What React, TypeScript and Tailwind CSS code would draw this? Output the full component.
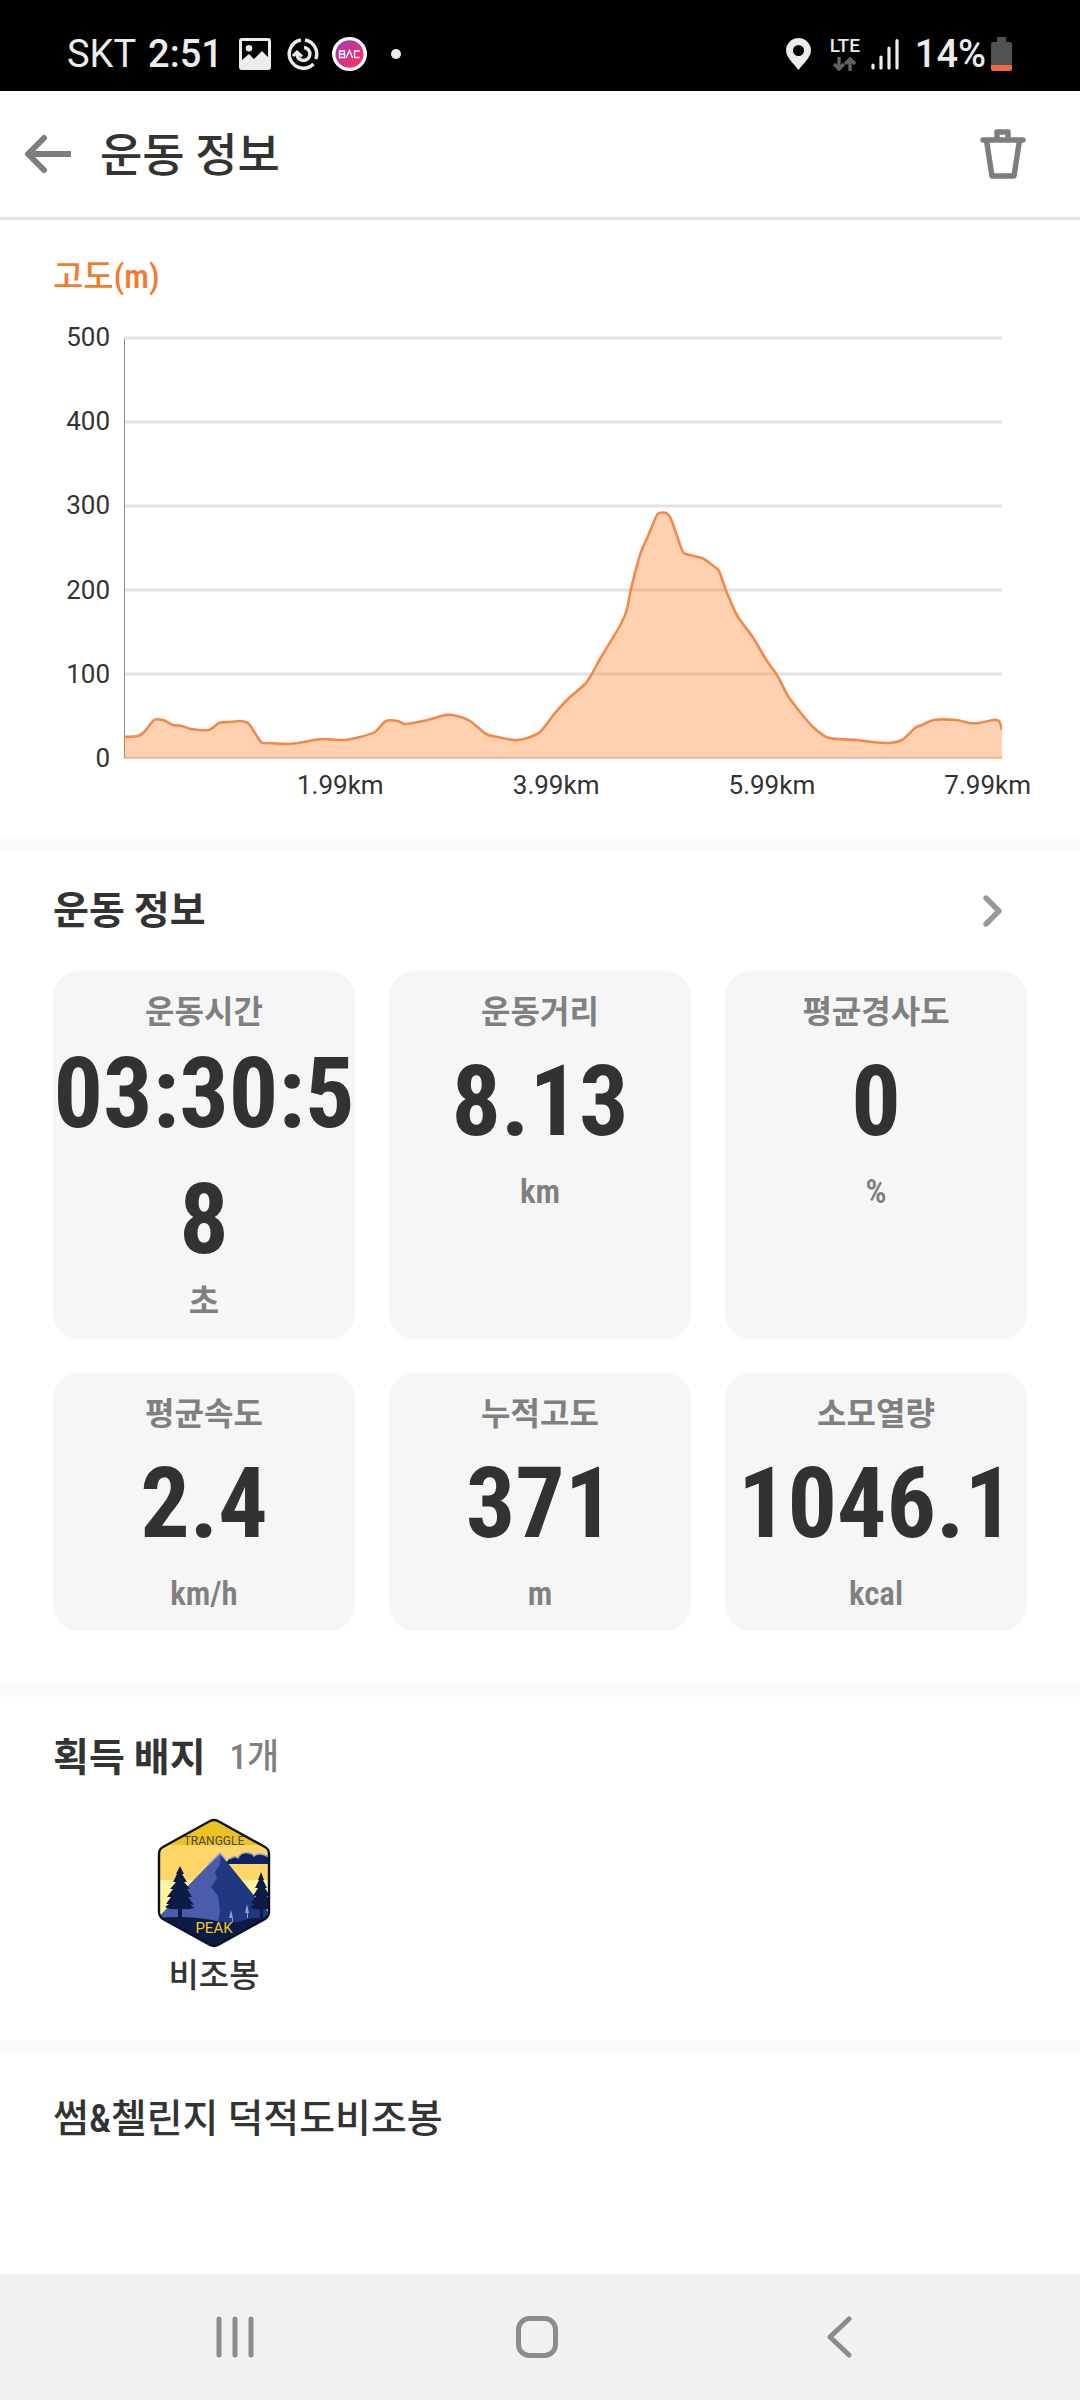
import type { ReactNode } from "react";

type Point = [number, number];

const elevation: Point[] = [
  [124, 737], [138, 736], [145, 731], [154, 720], [163, 720], [173, 725], [182, 726], [191, 729],
  [209, 730], [219, 723], [231, 722], [240, 721], [249, 724], [261, 742], [270, 743], [289, 744],
  [304, 742], [314, 740], [325, 739], [344, 740], [360, 737], [375, 732], [386, 721], [398, 721],
  [405, 724], [423, 721], [446, 715], [457, 716], [470, 721], [486, 734], [498, 737], [513, 740],
  [524, 739], [540, 732], [555, 713], [569, 698], [585, 684], [593, 672], [600, 659], [621, 624],
  [627, 609], [631, 589], [640, 555], [648, 536], [656, 517], [659, 513], [666, 513], [671, 519],
  [682, 550], [686, 554], [702, 558], [712, 565], [719, 571], [727, 593], [738, 617], [752, 636],
  [767, 661], [777, 675], [788, 696], [800, 712], [814, 728], [829, 738], [857, 740], [872, 742],
  [889, 743], [902, 740], [915, 728], [922, 725], [934, 720], [956, 720], [969, 723], [979, 723],
  [993, 720], [999, 721], [1002, 730],
];

function smooth(points: Point[]) {
  let d = `M${points[0][0]} ${points[0][1]}`;
  for (let i = 0; i < points.length - 1; i++) {
    const a = points[Math.max(i - 1, 0)];
    const b = points[i];
    const c = points[i + 1];
    const e = points[Math.min(i + 2, points.length - 1)];
    d += `C${b[0] + (c[0] - a[0]) / 8} ${b[1] + (c[1] - a[1]) / 8} ${c[0] - (e[0] - b[0]) / 8} ${c[1] - (e[1] - b[1]) / 8} ${c[0]} ${c[1]}`;
  }
  return d;
}

const linePath = smooth(elevation);
const gridLines = [338, 422, 506, 590, 674, 758];

const stats = [
  { label: "운동시간", value: "03:30:58", unit: "초", long: true },
  { label: "운동거리", value: "8.13", unit: "km" },
  { label: "평균경사도", value: "0", unit: "%" },
  { label: "평균속도", value: "2.4", unit: "km/h" },
  { label: "누적고도", value: "371", unit: "m" },
  { label: "소모열량", value: "1046.1", unit: "kcal" },
];

function StatusBar() {
  return (
    <div className="flex h-[91px] items-center justify-between bg-black pt-4 pr-[68px] pl-[67px] font-['Roboto',sans-serif] text-[#ececec]">
      <div className="flex items-center">
        <span className="text-[38px] leading-10">SKT</span>
        <span className="ml-3 text-[38px] leading-10 font-medium">2:51</span>
        <svg className="ml-4 size-8" viewBox="0 0 32 32" aria-hidden="true">
          <path
            fill="#ececec"
            fillRule="evenodd"
            d="M3 0h26a3 3 0 0 1 3 3v26a3 3 0 0 1-3 3H3a3 3 0 0 1-3-3V3a3 3 0 0 1 3-3zM3 3v19l7-6 5 5 8-8 6 6V3zM10 7a3.300 3.300 0 1 1 0 6.600a3.300 3.300 0 0 1 0-6.600z"
          />
        </svg>
        <svg className="ml-4 size-8" viewBox="0 0 32 32" fill="none" stroke="#ececec" aria-hidden="true">
          <path strokeWidth="3.400" d="M14 2A14.200 14.200 0 1 0 26.500 26" />
          <path strokeWidth="3.400" d="M18 2A14.200 14.200 0 0 1 28.800 21" />
          <path strokeWidth="3.400" d="M17 9.500A6.500 6.500 0 1 1 10 15" />
          <path strokeWidth="3" d="M6 18l4-4 5 4.500" />
        </svg>
        <svg className="ml-[13px] h-[34px] w-[35px]" viewBox="0 0 35 34" role="img" aria-label="BAC">
          <defs>
            <linearGradient id="bac" x1="0" y1="0" x2="1" y2="1">
              <stop offset="0.100" stopColor="#a43db0" />
              <stop offset="0.900" stopColor="#ff2d62" />
            </linearGradient>
          </defs>
          <ellipse cx="17.500" cy="17" rx="17.500" ry="17" fill="#fff" />
          <ellipse cx="17.500" cy="17" rx="14" ry="13.800" fill="url(#bac)" />
          <g fill="none" stroke="#fff" strokeWidth="1.300">
            <path d="M7.500 14h5v6.500h-5zM7.500 17.200h5" />
            <path d="M14 21l3.500-7.500L20.500 21" />
            <path d="M28 14h-5.500v6.500H28" />
          </g>
        </svg>
        <span className="ml-6 size-[10px] rounded-full bg-[#ececec]" />
      </div>
      <div className="flex items-center">
        <svg className="h-8 w-[25px]" viewBox="0 0 25 32" aria-hidden="true">
          <path
            fill="#ececec"
            fillRule="evenodd"
            d="M12.500 0A12.500 12.500 0 0 1 25 12.500C25 19 17 26 12.500 32 8 26 0 19 0 12.500A12.500 12.500 0 0 1 12.500 0zm0 7a5.500 5.500 0 1 0 0 11 5.500 5.500 0 0 0 0-11z"
          />
        </svg>
        <div className="ml-[18px] flex w-[32px] flex-col items-center">
          <span className="text-[19px] leading-[18px] font-medium">LTE</span>
          <svg className="mt-[2px] h-[14px] w-[23px]" viewBox="0 0 23 14" fill="none" stroke="#626262" strokeWidth="3.400" aria-hidden="true">
            <path d="M6 0v11M1 7l5 5 5-5M17 14V3M12 7l5-5 5 5" />
          </svg>
        </div>
        <svg className="ml-[10px] h-8 w-7" viewBox="0 0 28 32" stroke="#ececec" strokeWidth="3.200" strokeLinecap="round" aria-hidden="true">
          <path d="M2 27v3M10 19v11M18 10v20M26 2.500V30" />
        </svg>
        <span className="ml-4 text-[38px] leading-10 font-medium">14%</span>
        <svg className="ml-[5px] h-[34px] w-[21px]" viewBox="0 0 21 34" aria-hidden="true">
          <path fill="#525252" d="M6 0h9v5h4a2 2 0 0 1 2 2v21H0V7a2 2 0 0 1 2-2h4z" />
          <path fill="#ee6a40" d="M0 28h21v4a2 2 0 0 1-2 2H2a2 2 0 0 1-2-2z" />
        </svg>
      </div>
    </div>
  );
}

function Header() {
  return (
    <header className="flex h-[129px] items-center border-b-[3px] border-[#e2e2e2] pr-[54px] pl-6">
      <button type="button" aria-label="뒤로">
        <svg className="h-10 w-12" viewBox="0 0 48 40" fill="none" stroke="#7d7d7d" strokeWidth="6" strokeLinecap="round" strokeLinejoin="round" aria-hidden="true">
          <path d="M20 4L4 20l16 16" />
          <path d="M4 20h43" strokeLinecap="butt" />
        </svg>
      </button>
      <h1 className="ml-7 grow pt-[2px] text-[46px] leading-[60px] font-medium">운동 정보</h1>
      <button type="button" aria-label="삭제">
        <svg className="h-[50px] w-[46px]" viewBox="0 0 46 50" fill="none" stroke="#7d7d7d" strokeWidth="5.400" strokeLinecap="round" strokeLinejoin="round" aria-hidden="true">
          <path d="M3 11h40M17 10V3h11v7M6.500 11.500L12 47h22l5.500-35.500" />
        </svg>
      </button>
    </header>
  );
}

function ElevationChart() {
  return (
    <section className="pt-[37px] pb-10">
      <h2 className="pl-[53px] text-[33px] leading-10 font-medium text-[#f47b2a]">고도(m)</h2>
      <div className="mt-[25px] flex pr-[78px] pl-[53px] font-['Roboto',sans-serif] text-[26px] leading-[30px]">
        <div className="flex w-[57px] flex-col justify-between text-right">
          <span>500</span>
          <span>400</span>
          <span>300</span>
          <span>200</span>
          <span>100</span>
          <span>0</span>
        </div>
        <div className="grow py-[14px] pl-[14px]">
          <svg className="h-[423px] w-full" viewBox="124 336 878 423" preserveAspectRatio="none" role="img" aria-label="고도 그래프">
            <g stroke="#e2e2e2" strokeWidth="3">
              {gridLines.map((y) => (
                <line key={y} x1="124" x2="1002" y1={y} y2={y} />
              ))}
            </g>
            <line x1="124.500" x2="124.500" y1="339" y2="758" stroke="#8a8a8a" strokeWidth="1" />
            <path d={`${linePath}V759H124Z`} fill="#ff7b1e" fillOpacity="0.350" />
            <path d={linePath} fill="none" stroke="#f2894a" strokeWidth="2.600" vectorEffect="non-scaling-stroke" />
          </svg>
        </div>
      </div>
      <div className="flex justify-between pr-[49px] pl-[297px] font-['Roboto',sans-serif] text-[26px] leading-6">
        <span>1.99km</span>
        <span>3.99km</span>
        <span>5.99km</span>
        <span>7.99km</span>
      </div>
    </section>
  );
}

function StatCard({ label, value, unit, long }: { label: string; value: string; unit: string; long?: boolean }) {
  return (
    <div className="flex flex-col items-center rounded-[26px] bg-[#f6f6f6] pt-[22px] pb-[18px] text-center font-bold text-[#808080]">
      <dt className="text-[32px] leading-[38px]">{label}</dt>
      <dd className="w-full">
        <span
          className={
            long
              ? "block text-[98px] leading-[126px] break-all text-[#323232]"
              : "block text-[98px] leading-[142px] text-[#323232]"
          }
        >
          {value}
        </span>
        <span className="block text-[33px] leading-[38px] font-semibold">{unit}</span>
      </dd>
    </div>
  );
}

function Section({ children, className }: { children: ReactNode; className: string }) {
  return <section className={`border-t-[13px] border-[#fafafa] ${className}`}>{children}</section>;
}

function PeakBadge() {
  return (
    <svg className="h-[130px] w-[116px]" viewBox="0 0 116 130" role="img" aria-label="TRANGGLE PEAK">
      <defs>
        <clipPath id="hex">
          <path d="M54 3Q58 1 62 3L109 29Q113 31 113 36V94Q113 98 109 101L62 127Q58 129 54 127L7 101Q3 98 3 94V36Q3 31 7 29Z" />
        </clipPath>
      </defs>
      <g clipPath="url(#hex)">
        <rect width="116" height="130" fill="#ffd768" />
        <rect width="116" height="27" fill="#edc21f" />
        <rect y="62" width="116" height="40" fill="#fff59e" />
        <path fill="#0c2262" d="M70 46C72 40 78 37 82 40C85 33 95 34 98 38C102 34 112 37 116 40V46Z" />
        <path fill="none" stroke="#9aa3c2" strokeWidth="1.500" d="M74 41Q79 37 82 40C85 33 95 34 98 38C102 34 110 37 114 40" />
        <path fill="#4a5cab" d="M0 102L24 76L63 36L66 36L70 106L0 108Z" />
        <path fill="#20387f" d="M65 36L71 44L100 80L116 98V110H61L64 92L62 78L55 69L61 60L59 54L64 46Z" />
        <path fill="none" stroke="#9ba6d5" strokeWidth="1.500" d="M52 47L64 35L70 42" />
        <path fill="#0b1b45" d="M0 100Q30 97 56 102Q70 106 82 104Q98 98 116 100V130H0Z" />
        <path fill="#8e9cdc" d="M75 92l2 8h-4zM76 99h1v5h-1zM91 86l2 9h-4zM91 94h1v6h-1z" />
        <path
          fill="#0b1b45"
          d="M24 48L28 56L26 56L31 64L28 64L34 71L31 71L36 79L32 79L38 87L34 86L38 90Q32 92 26 91V101H22V91Q14 92 9 89L13 86L10 86L15 79L11 79L17 71L14 71L20 64L17 64L21 56L20 56Z"
        />
        <path
          fill="#0b1b45"
          d="M105 54L108 62L107 62L111 70L109 70L114 78L111 78L116 87V91Q110 92 107 91V100H104V91Q98 92 94 89L99 86L95 85L100 78L97 78L102 70L99 70L103 62L102 62Z"
        />
      </g>
      <path
        fill="none"
        stroke="#0a1226"
        strokeWidth="2.400"
        d="M54 3Q58 1 62 3L109 29Q113 31 113 36V94Q113 98 109 101L62 127Q58 129 54 127L7 101Q3 98 3 94V36Q3 31 7 29Z"
      />
      <text x="58" y="27" textAnchor="middle" className="fill-[#4a4a3c] font-['Roboto',sans-serif] text-[12px]">
        TRANGGLE
      </text>
      <text x="58" y="115" textAnchor="middle" className="fill-[#f2c81f] font-['Roboto',sans-serif] text-[15px]">
        PEAK
      </text>
    </svg>
  );
}

function NavigationBar() {
  return (
    <nav className="grid h-[126px] grid-cols-3 items-center justify-items-center bg-[#f1f1f1] pr-[90px] pb-px pl-[84px]">
      <button type="button" aria-label="최근 앱">
        <svg className="h-[42px] w-[42px]" viewBox="0 0 42 42" stroke="#8c8c8c" strokeWidth="5" strokeLinecap="round" aria-hidden="true">
          <path d="M5 3v36M21 3v36M37 3v36" />
        </svg>
      </button>
      <button type="button" aria-label="홈">
        <svg className="h-[44px] w-[44px]" viewBox="0 0 44 44" fill="none" stroke="#8c8c8c" strokeWidth="5" aria-hidden="true">
          <rect x="3.500" y="3.500" width="37" height="37" rx="11" />
        </svg>
      </button>
      <button type="button" aria-label="이전">
        <svg className="h-[42px] w-[42px]" viewBox="0 0 42 42" fill="none" stroke="#8c8c8c" strokeWidth="5" strokeLinecap="round" strokeLinejoin="round" aria-hidden="true">
          <path d="M31 3L12 21l19 18" />
        </svg>
      </button>
    </nav>
  );
}

export default function App() {
  return (
    <div className="flex min-h-screen flex-col bg-white font-['Roboto_Condensed','Noto_Sans_CJK_KR',sans-serif] text-[#333]">
      <StatusBar />
      <Header />
      <main className="grow">
        <ElevationChart />
        <Section className="px-[53px] pb-[53px]">
          <div className="flex h-[121px] items-center justify-between pr-[23px]">
            <h2 className="text-[39px] leading-[48px] font-bold">운동 정보</h2>
            <button type="button" aria-label="운동 정보 더보기">
              <svg className="h-[34px] w-[22px]" viewBox="0 0 22 34" fill="none" stroke="#999" strokeWidth="5.400" strokeLinecap="round" strokeLinejoin="round" aria-hidden="true">
                <path d="M4 4l13 13L4 30" />
              </svg>
            </button>
          </div>
          <dl className="grid grid-cols-3 gap-[34px]">
            {stats.map((s) => (
              <StatCard key={s.label} {...s} />
            ))}
          </dl>
        </Section>
        <Section className="px-[53px] pb-[44px]">
          <div className="flex h-[121px] items-center gap-6">
            <h2 className="text-[39px] leading-[48px] font-bold">획득 배지</h2>
            <span className="text-[35px] leading-[48px] font-medium text-[#808080]">1개</span>
          </div>
          <figure className="flex w-[322px] flex-col items-center">
            <PeakBadge />
            <figcaption className="mt-2 text-[33px] leading-10 font-medium">비조봉</figcaption>
          </figure>
        </Section>
        <Section className="px-[53px] pt-[42px]">
          <p className="text-[39px] leading-[48px] font-medium">썸&amp;첼린지 덕적도비조봉</p>
        </Section>
      </main>
      <NavigationBar />
    </div>
  );
}
